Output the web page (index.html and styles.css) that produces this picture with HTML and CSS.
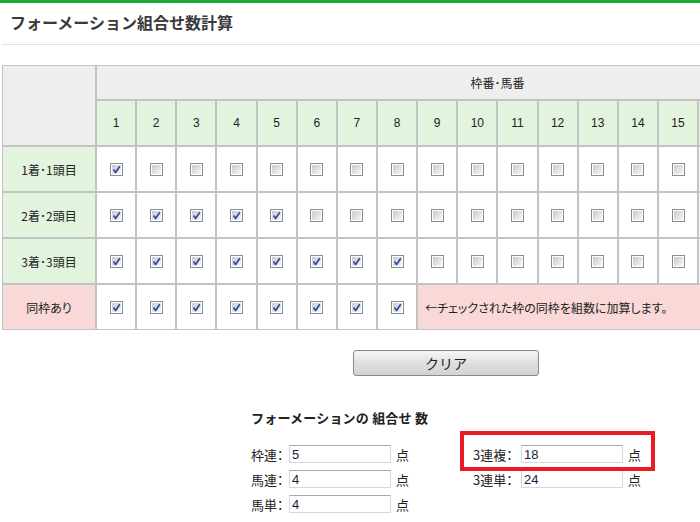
FILE: index.html
```html
<!DOCTYPE html>
<html lang="ja">
<head>
<meta charset="utf-8">
<title>フォーメーション組合せ数計算</title>
<link rel="stylesheet" href="styles.css">
</head>
<body>
<svg class="defs" width="0" height="0" aria-hidden="true">
  <defs>
    <linearGradient id="cbg" x1="0" y1="0" x2="1" y2="1">
      <stop offset="0" stop-color="#c9c9c9"/>
      <stop offset="1" stop-color="#f7f7f7"/>
    </linearGradient>
    <symbol id="cb-off" viewBox="0 0 13 13">
      <rect x="0.5" y="0.5" width="12" height="12" fill="#fff" stroke="#8c8c8c"/>
      <rect x="2" y="2" width="9" height="9" fill="url(#cbg)"/>
    </symbol>
    <symbol id="cb-on" viewBox="0 0 13 13">
      <rect x="0.5" y="0.5" width="12" height="12" fill="#fff" stroke="#8c8c8c"/>
      <rect x="2" y="2" width="9" height="9" fill="url(#cbg)"/>
      <path d="M3.6 6.6 L5.6 9.4 L9.8 3.2" fill="none" stroke="#2a46a6" stroke-width="1.7" stroke-linejoin="round"/>
    </symbol>
  </defs>
</svg>

<div class="topbar"></div>
<header class="head">
  <h1 class="title">フォーメーション組合せ数計算</h1>
</header>

<div class="page">
  <table class="grid">
    <colgroup>
      <col class="c-label">
      <col span="20">
    </colgroup>
    <thead>
      <tr class="r-cap">
        <th class="corner" rowspan="2"></th>
        <th class="cap" colspan="20">枠番･馬番</th>
      </tr>
      <tr class="r-num">
        <th>1</th><th>2</th><th>3</th><th>4</th><th>5</th><th>6</th><th>7</th><th>8</th><th>9</th><th>10</th>
        <th>11</th><th>12</th><th>13</th><th>14</th><th>15</th><th>16</th><th>17</th><th>18</th><th>19</th><th>20</th>
      </tr>
    </thead>
    <tbody>
      <tr>
        <th class="lbl">1着･1頭目</th>
        <td><svg class="cb"><use href="#cb-on"/></svg></td>
        <td><svg class="cb"><use href="#cb-off"/></svg></td>
        <td><svg class="cb"><use href="#cb-off"/></svg></td>
        <td><svg class="cb"><use href="#cb-off"/></svg></td>
        <td><svg class="cb"><use href="#cb-off"/></svg></td>
        <td><svg class="cb"><use href="#cb-off"/></svg></td>
        <td><svg class="cb"><use href="#cb-off"/></svg></td>
        <td><svg class="cb"><use href="#cb-off"/></svg></td>
        <td><svg class="cb"><use href="#cb-off"/></svg></td>
        <td><svg class="cb"><use href="#cb-off"/></svg></td>
        <td><svg class="cb"><use href="#cb-off"/></svg></td>
        <td><svg class="cb"><use href="#cb-off"/></svg></td>
        <td><svg class="cb"><use href="#cb-off"/></svg></td>
        <td><svg class="cb"><use href="#cb-off"/></svg></td>
        <td><svg class="cb"><use href="#cb-off"/></svg></td>
        <td><svg class="cb"><use href="#cb-off"/></svg></td>
        <td><svg class="cb"><use href="#cb-off"/></svg></td>
        <td><svg class="cb"><use href="#cb-off"/></svg></td>
        <td><svg class="cb"><use href="#cb-off"/></svg></td>
        <td><svg class="cb"><use href="#cb-off"/></svg></td>
      </tr>
      <tr>
        <th class="lbl">2着･2頭目</th>
        <td><svg class="cb"><use href="#cb-on"/></svg></td>
        <td><svg class="cb"><use href="#cb-on"/></svg></td>
        <td><svg class="cb"><use href="#cb-on"/></svg></td>
        <td><svg class="cb"><use href="#cb-on"/></svg></td>
        <td><svg class="cb"><use href="#cb-on"/></svg></td>
        <td><svg class="cb"><use href="#cb-off"/></svg></td>
        <td><svg class="cb"><use href="#cb-off"/></svg></td>
        <td><svg class="cb"><use href="#cb-off"/></svg></td>
        <td><svg class="cb"><use href="#cb-off"/></svg></td>
        <td><svg class="cb"><use href="#cb-off"/></svg></td>
        <td><svg class="cb"><use href="#cb-off"/></svg></td>
        <td><svg class="cb"><use href="#cb-off"/></svg></td>
        <td><svg class="cb"><use href="#cb-off"/></svg></td>
        <td><svg class="cb"><use href="#cb-off"/></svg></td>
        <td><svg class="cb"><use href="#cb-off"/></svg></td>
        <td><svg class="cb"><use href="#cb-off"/></svg></td>
        <td><svg class="cb"><use href="#cb-off"/></svg></td>
        <td><svg class="cb"><use href="#cb-off"/></svg></td>
        <td><svg class="cb"><use href="#cb-off"/></svg></td>
        <td><svg class="cb"><use href="#cb-off"/></svg></td>
      </tr>
      <tr>
        <th class="lbl">3着･3頭目</th>
        <td><svg class="cb"><use href="#cb-on"/></svg></td>
        <td><svg class="cb"><use href="#cb-on"/></svg></td>
        <td><svg class="cb"><use href="#cb-on"/></svg></td>
        <td><svg class="cb"><use href="#cb-on"/></svg></td>
        <td><svg class="cb"><use href="#cb-on"/></svg></td>
        <td><svg class="cb"><use href="#cb-on"/></svg></td>
        <td><svg class="cb"><use href="#cb-on"/></svg></td>
        <td><svg class="cb"><use href="#cb-on"/></svg></td>
        <td><svg class="cb"><use href="#cb-off"/></svg></td>
        <td><svg class="cb"><use href="#cb-off"/></svg></td>
        <td><svg class="cb"><use href="#cb-off"/></svg></td>
        <td><svg class="cb"><use href="#cb-off"/></svg></td>
        <td><svg class="cb"><use href="#cb-off"/></svg></td>
        <td><svg class="cb"><use href="#cb-off"/></svg></td>
        <td><svg class="cb"><use href="#cb-off"/></svg></td>
        <td><svg class="cb"><use href="#cb-off"/></svg></td>
        <td><svg class="cb"><use href="#cb-off"/></svg></td>
        <td><svg class="cb"><use href="#cb-off"/></svg></td>
        <td><svg class="cb"><use href="#cb-off"/></svg></td>
        <td><svg class="cb"><use href="#cb-off"/></svg></td>
      </tr>
      <tr>
        <th class="lbl same">同枠あり</th>
        <td><svg class="cb"><use href="#cb-on"/></svg></td>
        <td><svg class="cb"><use href="#cb-on"/></svg></td>
        <td><svg class="cb"><use href="#cb-on"/></svg></td>
        <td><svg class="cb"><use href="#cb-on"/></svg></td>
        <td><svg class="cb"><use href="#cb-on"/></svg></td>
        <td><svg class="cb"><use href="#cb-on"/></svg></td>
        <td><svg class="cb"><use href="#cb-on"/></svg></td>
        <td><svg class="cb"><use href="#cb-on"/></svg></td>
        <td class="note" colspan="12">←チェックされた枠の同枠を組数に加算します。</td>
      </tr>
    </tbody>
  </table>

  <div class="actions">
    <button class="clear" type="button">クリア</button>
  </div>

  <section class="result">
    <h2 class="result-title">フォーメーションの 組合せ 数</h2>
    <div class="cols">
      <div class="col col-left">
        <div class="row"><span class="k">枠連：</span><input class="val" type="text" value="5"><span class="u">点</span></div>
        <div class="row"><span class="k">馬連：</span><input class="val" type="text" value="4"><span class="u">点</span></div>
        <div class="row"><span class="k">馬単：</span><input class="val" type="text" value="4"><span class="u">点</span></div>
      </div>
      <div class="col col-right">
        <div class="row"><span class="k">3連複：</span><input class="val" type="text" value="18"><span class="u">点</span></div>
        <div class="row"><span class="k">3連単：</span><input class="val" type="text" value="24"><span class="u">点</span></div>
        <div class="highlight"></div>
      </div>
    </div>
  </section>
</div>
</body>
</html>
```

FILE: styles.css
```css
html, body {
  margin: 0;
  padding: 0;
  background: #fff;
}
body {
  overflow: hidden;
  font-family: "Noto Sans CJK JP", "Liberation Sans", sans-serif;
  color: #333;
  width: 700px;
}
.defs {
  position: absolute;
  width: 0;
  height: 0;
  overflow: hidden;
}
.topbar {
  height: 3px;
  background: #1fa936;
}
.head {
  box-sizing: border-box;
  height: 42px;
  margin: 0 0 0 2px;
  padding: 9px 0 0 8px;
  border-bottom: 1px solid #e2e2e2;
}
.title {
  margin: 0;
  font-size: 16px;
  line-height: 20px;
  font-weight: bold;
  color: #3a3a3a;
}
.page {
  width: 888px;
  margin: 20px 0 0 2px;
}
.grid {
  width: 897px;
  table-layout: fixed;
  border-collapse: separate;
  border-spacing: 0;
  font-size: 12px;
  font-feature-settings: "palt";
}
.c-label {
  width: 94px;
}
.grid th,
.grid td {
  border: 1px solid #c3c3c3;
  padding: 0;
  text-align: center;
  font-weight: normal;
  color: #222;
}
.grid .r-cap th {
  height: 33px;
  background: #eeeeee;
}
.grid .corner {
  background: #eeeeee;
}
.grid .r-num th {
  height: 44px;
  background: #e2f3de;
  font-family: "Liberation Sans", sans-serif;
}
.grid tbody tr {
  height: 46px;
}
.grid .lbl {
  background: #e2f3de;
}
.grid .lbl.same {
  background: #f9d8d8;
}
.grid td {
  background: #fff;
}
.grid .note {
  background: #f9d8d8;
  text-align: left;
  padding-left: 7px;
  font-size: 12px;
}
.cb {
  display: block;
  width: 13px;
  height: 13px;
  margin: 0 auto;
}
.actions {
  width: 888px;
  padding-top: 20px;
  display: flex;
  justify-content: center;
}
.clear {
  width: 186px;
  height: 26px;
  padding: 0;
  border: 1px solid #8a8a8a;
  border-radius: 3px;
  background: linear-gradient(#f6f6f6, #dedede 55%, #d2d2d2);
  font-family: "Noto Sans CJK JP", sans-serif;
  font-size: 14px;
  color: #222;
}
.result {
  width: 390px;
  margin: 34px auto 0;
}
.result-title {
  margin: 0;
  font-size: 13px;
  line-height: 16px;
  font-weight: bold;
  color: #222;
  letter-spacing: 0.2px;
}
.cols {
  display: flex;
  margin-top: 19px;
}
.col {
  display: flex;
  flex-direction: column;
  gap: 7px;
}
.col-left {
  width: 224px;
}
.col-right {
  position: relative;
}
.row {
  display: flex;
  align-items: center;
  height: 18px;
  font-size: 13px;
  color: #222;
  white-space: nowrap;
}
.k {
  flex: none;
  font-feature-settings: "palt";
}
.col-left .k {
  width: 38px;
}
.col-right .k {
  width: 48px;
}
.val {
  flex: none;
  box-sizing: border-box;
  width: 102px;
  height: 18px;
  margin: 0;
  padding: 0 2px;
  border: 1px solid #d3d8de;
  border-top-color: #a9a9a9;
  font-family: "Liberation Sans", sans-serif;
  font-size: 13px;
  color: #1c1c3c;
  background: #fff;
}
.u {
  margin-left: 5px;
}
.highlight {
  position: absolute;
  left: -13px;
  top: -14px;
  width: 195px;
  height: 40px;
  box-sizing: border-box;
  border: 4px solid #ea1b24;
}
```
